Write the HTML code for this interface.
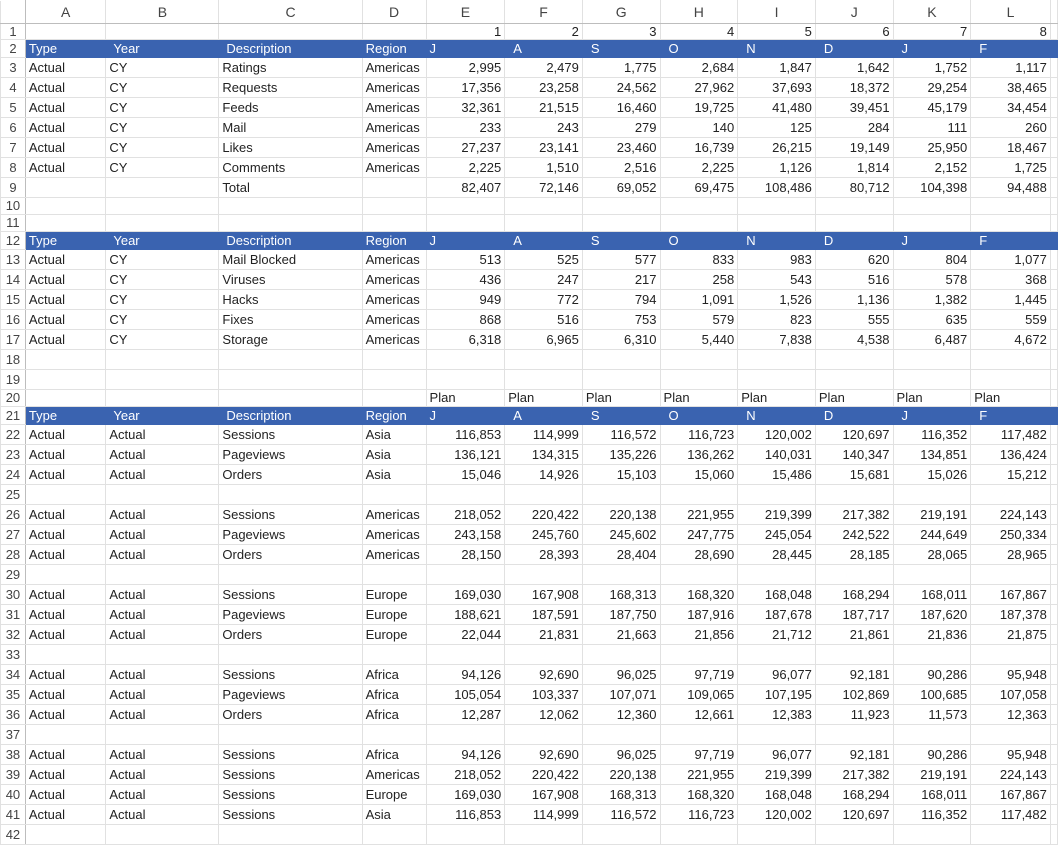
<!DOCTYPE html>
<html><head><meta charset="utf-8"><style>
body{margin:0;background:#fff;width:1058px;height:837px;overflow:hidden;font-family:"Liberation Sans",Arial,sans-serif;font-size:13px;color:#222}
table{border-collapse:collapse;table-layout:fixed}
td{border:1px solid #e1e1e1;padding:0 3px;white-space:nowrap;overflow:hidden;height:19px;line-height:17px}
td.n{text-align:right}
tr.h td{background:#fff;color:#444;text-align:center;font-size:14px;border-top-color:#fff;border-bottom:1px solid #bdbdbd;height:22px}
td.rh{background:#fff;color:#444;text-align:center;padding:0;border-right:1px solid #bdbdbd;font-size:13px}
tr.b td{background:#3a63b0;color:#fff;border-color:#3a63b0;height:17px;line-height:17px}
tr.b td.rh{background:#fff;color:#444;border-color:#e1e1e1;border-right-color:#bdbdbd}
tr.b td.i{padding-left:7px}
tr.b td.j{padding-left:8px}
tr.s td{height:16px;line-height:16px}
tr.s1 td{height:15px;line-height:15px}
</style></head><body>
<table>
<colgroup><col style="width:25px"><col style="width:81px"><col style="width:114px"><col style="width:144px"><col style="width:64px"><col style="width:79px"><col style="width:78px"><col style="width:78px"><col style="width:78px"><col style="width:78px"><col style="width:78px"><col style="width:78px"><col style="width:80px"><col style="width:3px"></colgroup>
<tr class="h"><td class="rh" style="border-bottom-color:#bdbdbd"></td><td>A</td><td>B</td><td>C</td><td>D</td><td>E</td><td>F</td><td>G</td><td>H</td><td>I</td><td>J</td><td>K</td><td>L</td><td></td></tr>
<tr class="s1"><td class="rh">1</td><td></td><td></td><td></td><td></td><td class="n">1</td><td class="n">2</td><td class="n">3</td><td class="n">4</td><td class="n">5</td><td class="n">6</td><td class="n">7</td><td class="n">8</td><td></td></tr>
<tr class="b"><td class="rh">2</td><td>Type</td><td class="i">Year</td><td class="i">Description</td><td>Region</td><td>J</td><td class="j">A</td><td class="j">S</td><td class="j">O</td><td class="j">N</td><td class="j">D</td><td class="j">J</td><td class="j">F</td><td></td></tr>
<tr><td class="rh">3</td><td>Actual</td><td>CY</td><td>Ratings</td><td>Americas</td><td class="n">2,995</td><td class="n">2,479</td><td class="n">1,775</td><td class="n">2,684</td><td class="n">1,847</td><td class="n">1,642</td><td class="n">1,752</td><td class="n">1,117</td><td></td></tr>
<tr><td class="rh">4</td><td>Actual</td><td>CY</td><td>Requests</td><td>Americas</td><td class="n">17,356</td><td class="n">23,258</td><td class="n">24,562</td><td class="n">27,962</td><td class="n">37,693</td><td class="n">18,372</td><td class="n">29,254</td><td class="n">38,465</td><td></td></tr>
<tr><td class="rh">5</td><td>Actual</td><td>CY</td><td>Feeds</td><td>Americas</td><td class="n">32,361</td><td class="n">21,515</td><td class="n">16,460</td><td class="n">19,725</td><td class="n">41,480</td><td class="n">39,451</td><td class="n">45,179</td><td class="n">34,454</td><td></td></tr>
<tr><td class="rh">6</td><td>Actual</td><td>CY</td><td>Mail</td><td>Americas</td><td class="n">233</td><td class="n">243</td><td class="n">279</td><td class="n">140</td><td class="n">125</td><td class="n">284</td><td class="n">111</td><td class="n">260</td><td></td></tr>
<tr><td class="rh">7</td><td>Actual</td><td>CY</td><td>Likes</td><td>Americas</td><td class="n">27,237</td><td class="n">23,141</td><td class="n">23,460</td><td class="n">16,739</td><td class="n">26,215</td><td class="n">19,149</td><td class="n">25,950</td><td class="n">18,467</td><td></td></tr>
<tr><td class="rh">8</td><td>Actual</td><td>CY</td><td>Comments</td><td>Americas</td><td class="n">2,225</td><td class="n">1,510</td><td class="n">2,516</td><td class="n">2,225</td><td class="n">1,126</td><td class="n">1,814</td><td class="n">2,152</td><td class="n">1,725</td><td></td></tr>
<tr><td class="rh">9</td><td></td><td></td><td>Total</td><td></td><td class="n">82,407</td><td class="n">72,146</td><td class="n">69,052</td><td class="n">69,475</td><td class="n">108,486</td><td class="n">80,712</td><td class="n">104,398</td><td class="n">94,488</td><td></td></tr>
<tr class="s"><td class="rh">10</td><td></td><td></td><td></td><td></td><td></td><td></td><td></td><td></td><td></td><td></td><td></td><td></td><td></td></tr>
<tr class="s"><td class="rh">11</td><td></td><td></td><td></td><td></td><td></td><td></td><td></td><td></td><td></td><td></td><td></td><td></td><td></td></tr>
<tr class="b"><td class="rh">12</td><td>Type</td><td class="i">Year</td><td class="i">Description</td><td>Region</td><td>J</td><td class="j">A</td><td class="j">S</td><td class="j">O</td><td class="j">N</td><td class="j">D</td><td class="j">J</td><td class="j">F</td><td></td></tr>
<tr><td class="rh">13</td><td>Actual</td><td>CY</td><td>Mail Blocked</td><td>Americas</td><td class="n">513</td><td class="n">525</td><td class="n">577</td><td class="n">833</td><td class="n">983</td><td class="n">620</td><td class="n">804</td><td class="n">1,077</td><td></td></tr>
<tr><td class="rh">14</td><td>Actual</td><td>CY</td><td>Viruses</td><td>Americas</td><td class="n">436</td><td class="n">247</td><td class="n">217</td><td class="n">258</td><td class="n">543</td><td class="n">516</td><td class="n">578</td><td class="n">368</td><td></td></tr>
<tr><td class="rh">15</td><td>Actual</td><td>CY</td><td>Hacks</td><td>Americas</td><td class="n">949</td><td class="n">772</td><td class="n">794</td><td class="n">1,091</td><td class="n">1,526</td><td class="n">1,136</td><td class="n">1,382</td><td class="n">1,445</td><td></td></tr>
<tr><td class="rh">16</td><td>Actual</td><td>CY</td><td>Fixes</td><td>Americas</td><td class="n">868</td><td class="n">516</td><td class="n">753</td><td class="n">579</td><td class="n">823</td><td class="n">555</td><td class="n">635</td><td class="n">559</td><td></td></tr>
<tr><td class="rh">17</td><td>Actual</td><td>CY</td><td>Storage</td><td>Americas</td><td class="n">6,318</td><td class="n">6,965</td><td class="n">6,310</td><td class="n">5,440</td><td class="n">7,838</td><td class="n">4,538</td><td class="n">6,487</td><td class="n">4,672</td><td></td></tr>
<tr><td class="rh" style="height:18px">18</td><td></td><td></td><td></td><td></td><td></td><td></td><td></td><td></td><td></td><td></td><td></td><td></td><td></td></tr>
<tr><td class="rh">19</td><td></td><td></td><td></td><td></td><td></td><td></td><td></td><td></td><td></td><td></td><td></td><td></td><td></td></tr>
<tr class="s"><td class="rh">20</td><td></td><td></td><td></td><td></td><td>Plan</td><td>Plan</td><td>Plan</td><td>Plan</td><td>Plan</td><td>Plan</td><td>Plan</td><td>Plan</td><td></td></tr>
<tr class="b"><td class="rh">21</td><td>Type</td><td class="i">Year</td><td class="i">Description</td><td>Region</td><td>J</td><td class="j">A</td><td class="j">S</td><td class="j">O</td><td class="j">N</td><td class="j">D</td><td class="j">J</td><td class="j">F</td><td></td></tr>
<tr><td class="rh">22</td><td>Actual</td><td>Actual</td><td>Sessions</td><td>Asia</td><td class="n">116,853</td><td class="n">114,999</td><td class="n">116,572</td><td class="n">116,723</td><td class="n">120,002</td><td class="n">120,697</td><td class="n">116,352</td><td class="n">117,482</td><td></td></tr>
<tr><td class="rh">23</td><td>Actual</td><td>Actual</td><td>Pageviews</td><td>Asia</td><td class="n">136,121</td><td class="n">134,315</td><td class="n">135,226</td><td class="n">136,262</td><td class="n">140,031</td><td class="n">140,347</td><td class="n">134,851</td><td class="n">136,424</td><td></td></tr>
<tr><td class="rh">24</td><td>Actual</td><td>Actual</td><td>Orders</td><td>Asia</td><td class="n">15,046</td><td class="n">14,926</td><td class="n">15,103</td><td class="n">15,060</td><td class="n">15,486</td><td class="n">15,681</td><td class="n">15,026</td><td class="n">15,212</td><td></td></tr>
<tr><td class="rh">25</td><td></td><td></td><td></td><td></td><td></td><td></td><td></td><td></td><td></td><td></td><td></td><td></td><td></td></tr>
<tr><td class="rh">26</td><td>Actual</td><td>Actual</td><td>Sessions</td><td>Americas</td><td class="n">218,052</td><td class="n">220,422</td><td class="n">220,138</td><td class="n">221,955</td><td class="n">219,399</td><td class="n">217,382</td><td class="n">219,191</td><td class="n">224,143</td><td></td></tr>
<tr><td class="rh">27</td><td>Actual</td><td>Actual</td><td>Pageviews</td><td>Americas</td><td class="n">243,158</td><td class="n">245,760</td><td class="n">245,602</td><td class="n">247,775</td><td class="n">245,054</td><td class="n">242,522</td><td class="n">244,649</td><td class="n">250,334</td><td></td></tr>
<tr><td class="rh">28</td><td>Actual</td><td>Actual</td><td>Orders</td><td>Americas</td><td class="n">28,150</td><td class="n">28,393</td><td class="n">28,404</td><td class="n">28,690</td><td class="n">28,445</td><td class="n">28,185</td><td class="n">28,065</td><td class="n">28,965</td><td></td></tr>
<tr><td class="rh">29</td><td></td><td></td><td></td><td></td><td></td><td></td><td></td><td></td><td></td><td></td><td></td><td></td><td></td></tr>
<tr><td class="rh">30</td><td>Actual</td><td>Actual</td><td>Sessions</td><td>Europe</td><td class="n">169,030</td><td class="n">167,908</td><td class="n">168,313</td><td class="n">168,320</td><td class="n">168,048</td><td class="n">168,294</td><td class="n">168,011</td><td class="n">167,867</td><td></td></tr>
<tr><td class="rh">31</td><td>Actual</td><td>Actual</td><td>Pageviews</td><td>Europe</td><td class="n">188,621</td><td class="n">187,591</td><td class="n">187,750</td><td class="n">187,916</td><td class="n">187,678</td><td class="n">187,717</td><td class="n">187,620</td><td class="n">187,378</td><td></td></tr>
<tr><td class="rh">32</td><td>Actual</td><td>Actual</td><td>Orders</td><td>Europe</td><td class="n">22,044</td><td class="n">21,831</td><td class="n">21,663</td><td class="n">21,856</td><td class="n">21,712</td><td class="n">21,861</td><td class="n">21,836</td><td class="n">21,875</td><td></td></tr>
<tr><td class="rh">33</td><td></td><td></td><td></td><td></td><td></td><td></td><td></td><td></td><td></td><td></td><td></td><td></td><td></td></tr>
<tr><td class="rh">34</td><td>Actual</td><td>Actual</td><td>Sessions</td><td>Africa</td><td class="n">94,126</td><td class="n">92,690</td><td class="n">96,025</td><td class="n">97,719</td><td class="n">96,077</td><td class="n">92,181</td><td class="n">90,286</td><td class="n">95,948</td><td></td></tr>
<tr><td class="rh">35</td><td>Actual</td><td>Actual</td><td>Pageviews</td><td>Africa</td><td class="n">105,054</td><td class="n">103,337</td><td class="n">107,071</td><td class="n">109,065</td><td class="n">107,195</td><td class="n">102,869</td><td class="n">100,685</td><td class="n">107,058</td><td></td></tr>
<tr><td class="rh">36</td><td>Actual</td><td>Actual</td><td>Orders</td><td>Africa</td><td class="n">12,287</td><td class="n">12,062</td><td class="n">12,360</td><td class="n">12,661</td><td class="n">12,383</td><td class="n">11,923</td><td class="n">11,573</td><td class="n">12,363</td><td></td></tr>
<tr><td class="rh">37</td><td></td><td></td><td></td><td></td><td></td><td></td><td></td><td></td><td></td><td></td><td></td><td></td><td></td></tr>
<tr><td class="rh">38</td><td>Actual</td><td>Actual</td><td>Sessions</td><td>Africa</td><td class="n">94,126</td><td class="n">92,690</td><td class="n">96,025</td><td class="n">97,719</td><td class="n">96,077</td><td class="n">92,181</td><td class="n">90,286</td><td class="n">95,948</td><td></td></tr>
<tr><td class="rh">39</td><td>Actual</td><td>Actual</td><td>Sessions</td><td>Americas</td><td class="n">218,052</td><td class="n">220,422</td><td class="n">220,138</td><td class="n">221,955</td><td class="n">219,399</td><td class="n">217,382</td><td class="n">219,191</td><td class="n">224,143</td><td></td></tr>
<tr><td class="rh">40</td><td>Actual</td><td>Actual</td><td>Sessions</td><td>Europe</td><td class="n">169,030</td><td class="n">167,908</td><td class="n">168,313</td><td class="n">168,320</td><td class="n">168,048</td><td class="n">168,294</td><td class="n">168,011</td><td class="n">167,867</td><td></td></tr>
<tr><td class="rh">41</td><td>Actual</td><td>Actual</td><td>Sessions</td><td>Asia</td><td class="n">116,853</td><td class="n">114,999</td><td class="n">116,572</td><td class="n">116,723</td><td class="n">120,002</td><td class="n">120,697</td><td class="n">116,352</td><td class="n">117,482</td><td></td></tr>
<tr><td class="rh">42</td><td></td><td></td><td></td><td></td><td></td><td></td><td></td><td></td><td></td><td></td><td></td><td></td><td></td></tr>
</table>
</body></html>
